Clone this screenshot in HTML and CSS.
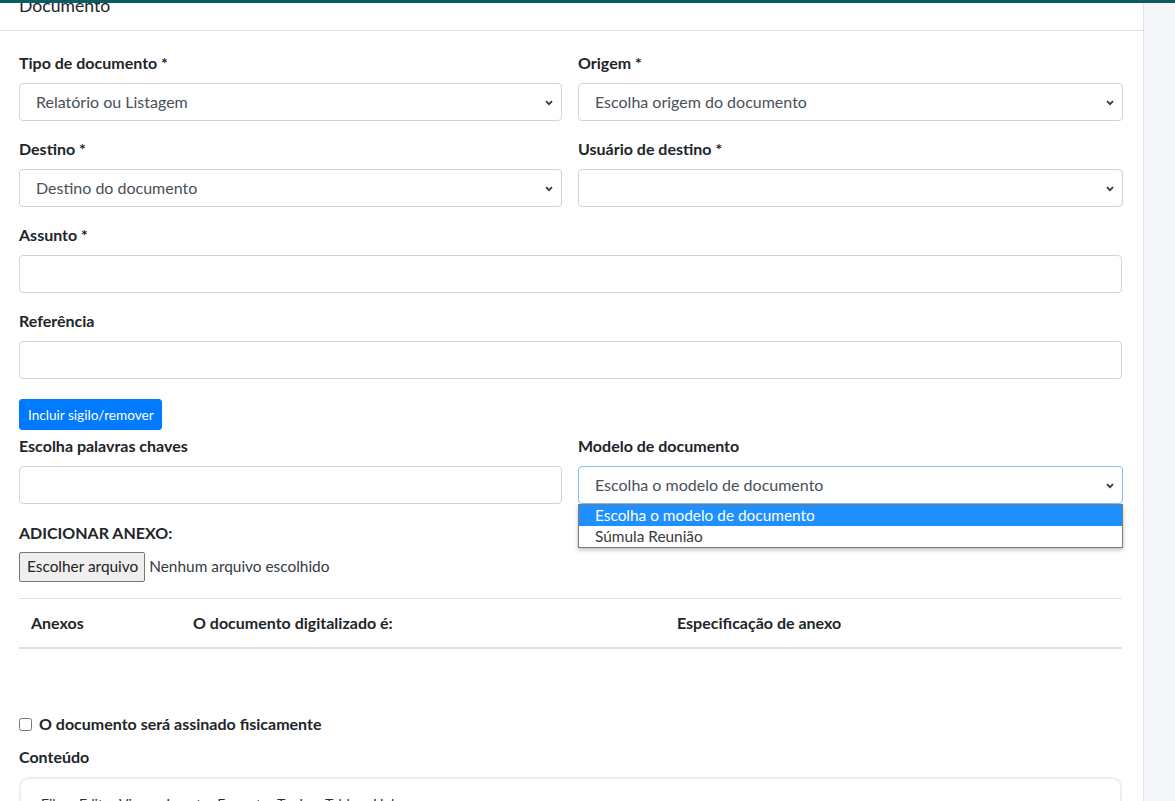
FILE: index.html
```html
<!DOCTYPE html>
<html lang="pt-BR">
<head>
<meta charset="utf-8">
<title>Documento</title>
<link rel="stylesheet" href="styles.css">
</head>
<body>
<div class="topbar"></div>
<div class="layout">
  <div class="card">
    <div class="card-header"><h3 class="card-title">Documento</h3></div>
    <div class="card-body">
      <div class="row">
        <div class="form-group">
          <label class="lbl">Tipo de documento *</label>
          <div class="select"><span>Relatório ou Listagem</span><svg class="chev" viewBox="0 0 8 6" width="8" height="6"><path d="M1 1.2 4 4.2 7 1.2" fill="none" stroke="#343a40" stroke-width="1.8"/></svg></div>
        </div>
        <div class="form-group">
          <label class="lbl">Origem *</label>
          <div class="select"><span>Escolha origem do documento</span><svg class="chev" viewBox="0 0 8 6" width="8" height="6"><path d="M1 1.2 4 4.2 7 1.2" fill="none" stroke="#343a40" stroke-width="1.8"/></svg></div>
        </div>
      </div>
      <div class="row">
        <div class="form-group">
          <label class="lbl">Destino *</label>
          <div class="select"><span>Destino do documento</span><svg class="chev" viewBox="0 0 8 6" width="8" height="6"><path d="M1 1.2 4 4.2 7 1.2" fill="none" stroke="#343a40" stroke-width="1.8"/></svg></div>
        </div>
        <div class="form-group">
          <label class="lbl">Usuário de destino *</label>
          <div class="select"><span></span><svg class="chev" viewBox="0 0 8 6" width="8" height="6"><path d="M1 1.2 4 4.2 7 1.2" fill="none" stroke="#343a40" stroke-width="1.8"/></svg></div>
        </div>
      </div>
      <div class="form-group">
        <label class="lbl">Assunto *</label>
        <div class="input"></div>
      </div>
      <div class="form-group">
        <label class="lbl">Referência</label>
        <div class="input"></div>
      </div>
      <button class="btn-primary">Incluir sigilo/remover</button>
      <div class="row row-kw">
        <div class="form-group">
          <label class="lbl">Escolha palavras chaves</label>
          <div class="input"></div>
        </div>
        <div class="form-group dd-wrap">
          <label class="lbl">Modelo de documento</label>
          <div class="select focus"><span>Escolha o modelo de documento</span><svg class="chev" viewBox="0 0 8 6" width="8" height="6"><path d="M1 1.2 4 4.2 7 1.2" fill="none" stroke="#343a40" stroke-width="1.8"/></svg></div>
          <ul class="dropdown">
            <li class="sel">Escolha o modelo de documento</li>
            <li>Súmula Reunião</li>
          </ul>
        </div>
      </div>
      <label class="lbl lbl-anexo">ADICIONAR ANEXO:</label>
      <div class="file">
        <span class="file-btn">Escolher arquivo</span>
        <span class="file-name">Nenhum arquivo escolhido</span>
      </div>
      <table class="table">
        <thead>
          <tr><th class="c1">Anexos</th><th class="c2">O documento digitalizado é:</th><th>Especificação de anexo</th></tr>
        </thead>
      </table>
      <div class="check">
        <input type="checkbox" id="fis"><label for="fis">O documento será assinado fisicamente</label>
      </div>
      <label class="lbl lbl-cont">Conteúdo</label>
      <div class="editor">
        <div class="menubar">
          <span>File</span><span>Edit</span><span>View</span><span>Insert</span><span>Format</span><span>Tools</span><span>Table</span><span>Help</span>
        </div>
      </div>
    </div>
  </div>
  <div class="side"></div>
</div>
</body>
</html>
```
FILE: styles.css
```css
* { box-sizing: border-box; }
html, body { margin: 0; padding: 0; }
body {
  font-family: "Lato", "Open Sans", sans-serif;
  font-size: 16px;
  line-height: 1.5;
  color: #212529;
  background: #f4f6f9;
  overflow: hidden;
  height: 801px;
}
.topbar { height: 3px; background: #0d5b61; }
.layout { display: flex; height: 798px; }
.card {
  width: 1144px;
  background: #fff;
  border-right: 1px solid #dee2e6;
}
.side { flex: 1; background: #f4f6f9; }
.card-header {
  height: 28px;
  border-bottom: 1px solid #dee2e6;
  padding: 0 19px;
  overflow: hidden;
}
.card-title {
  margin: -10px 0 0;
  font-size: 17.6px;
  font-weight: 400;
  line-height: 1.5;
  color: #212529;
}
.card-body { padding: 20px 21px 0 19px; }
.row { display: grid; grid-template-columns: 543px 545px; column-gap: 16px; }
.form-group { margin-bottom: 16px; position: relative; }
.lbl {
  display: block;
  font-weight: 700;
  margin-bottom: 8px;
  line-height: 24px;
}
.select, .input {
  height: 38px;
  border: 1px solid #ced4da;
  border-radius: 4px;
  background: #fff;
  color: #495057;
  display: flex;
  align-items: center;
  padding: 0 12px 0 16px;
  position: relative;
}
.select span { flex: 1; white-space: nowrap; }
.chev { position: absolute; right: 8px; top: 16px; }
.select.focus { border-color: #80bdff; }
.btn-primary {
  display: block;
  margin: 20px 0 4px;
  height: 31px;
  padding: 0 7px 0 8px;
  font-family: inherit;
  font-size: 13.6px;
  color: #fff;
  background: #007bff;
  border: 1px solid #007bff;
  border-radius: 3px;
}
.dropdown {
  position: absolute;
  left: 0;
  right: 0;
  top: 70px;
  margin: 0;
  padding: 0;
  list-style: none;
  background: #fff;
  border: 1px solid #7a7a7a;
  box-shadow: 0 2px 4px rgba(0,0,0,.25);
  z-index: 5;
  font-size: 15.4px;
  color: #3a3a3a;
}
.dropdown li { height: 21px; line-height: 21px; padding-left: 16px; }
.dropdown li.sel { background: #1e90ff; color: #fff; }
.lbl-anexo { margin-top: 1px; margin-bottom: 7px; }
.file { display: flex; align-items: center; height: 30px; }
.file-btn {
  height: 30px;
  padding: 0 6px 0 7px;
  border: 1px solid #767676;
  border-radius: 2px;
  background: #efefef;
  color: #222;
  display: flex;
  align-items: center;
  font-size: 15.4px;
}
.file-name { margin-left: 4px; color: #343a40; font-size: 15.4px; }
.table {
  width: 1103px;
  margin-top: 16px;
  border-collapse: collapse;
}
.table th {
  text-align: left;
  padding: 12px;
  line-height: 24px;
  border-top: 1px solid #dee2e6;
  border-bottom: 2px solid #dee2e6;
  font-weight: 700;
}
.table th.c1 { width: 162px; }
.table th.c2 { width: 484px; }
.check {
  margin-top: 63px;
  display: flex;
  align-items: center;
  height: 24px;
}
.check input { margin: 0 7px 0 0; width: 13px; height: 13px; }
.check label { font-weight: 700; }
.lbl-cont { margin-top: 9px; }
.editor {
  margin-top: 0;
  height: 60px;
  width: 1103px;
  border: 2px solid #eeeeee;
  border-radius: 10px;
  padding: 14px 0 0 20px;
}
.menubar { display: flex; font-size: 14px; color: #222f3e; }
.menubar span { margin-right: 16px; }
```
